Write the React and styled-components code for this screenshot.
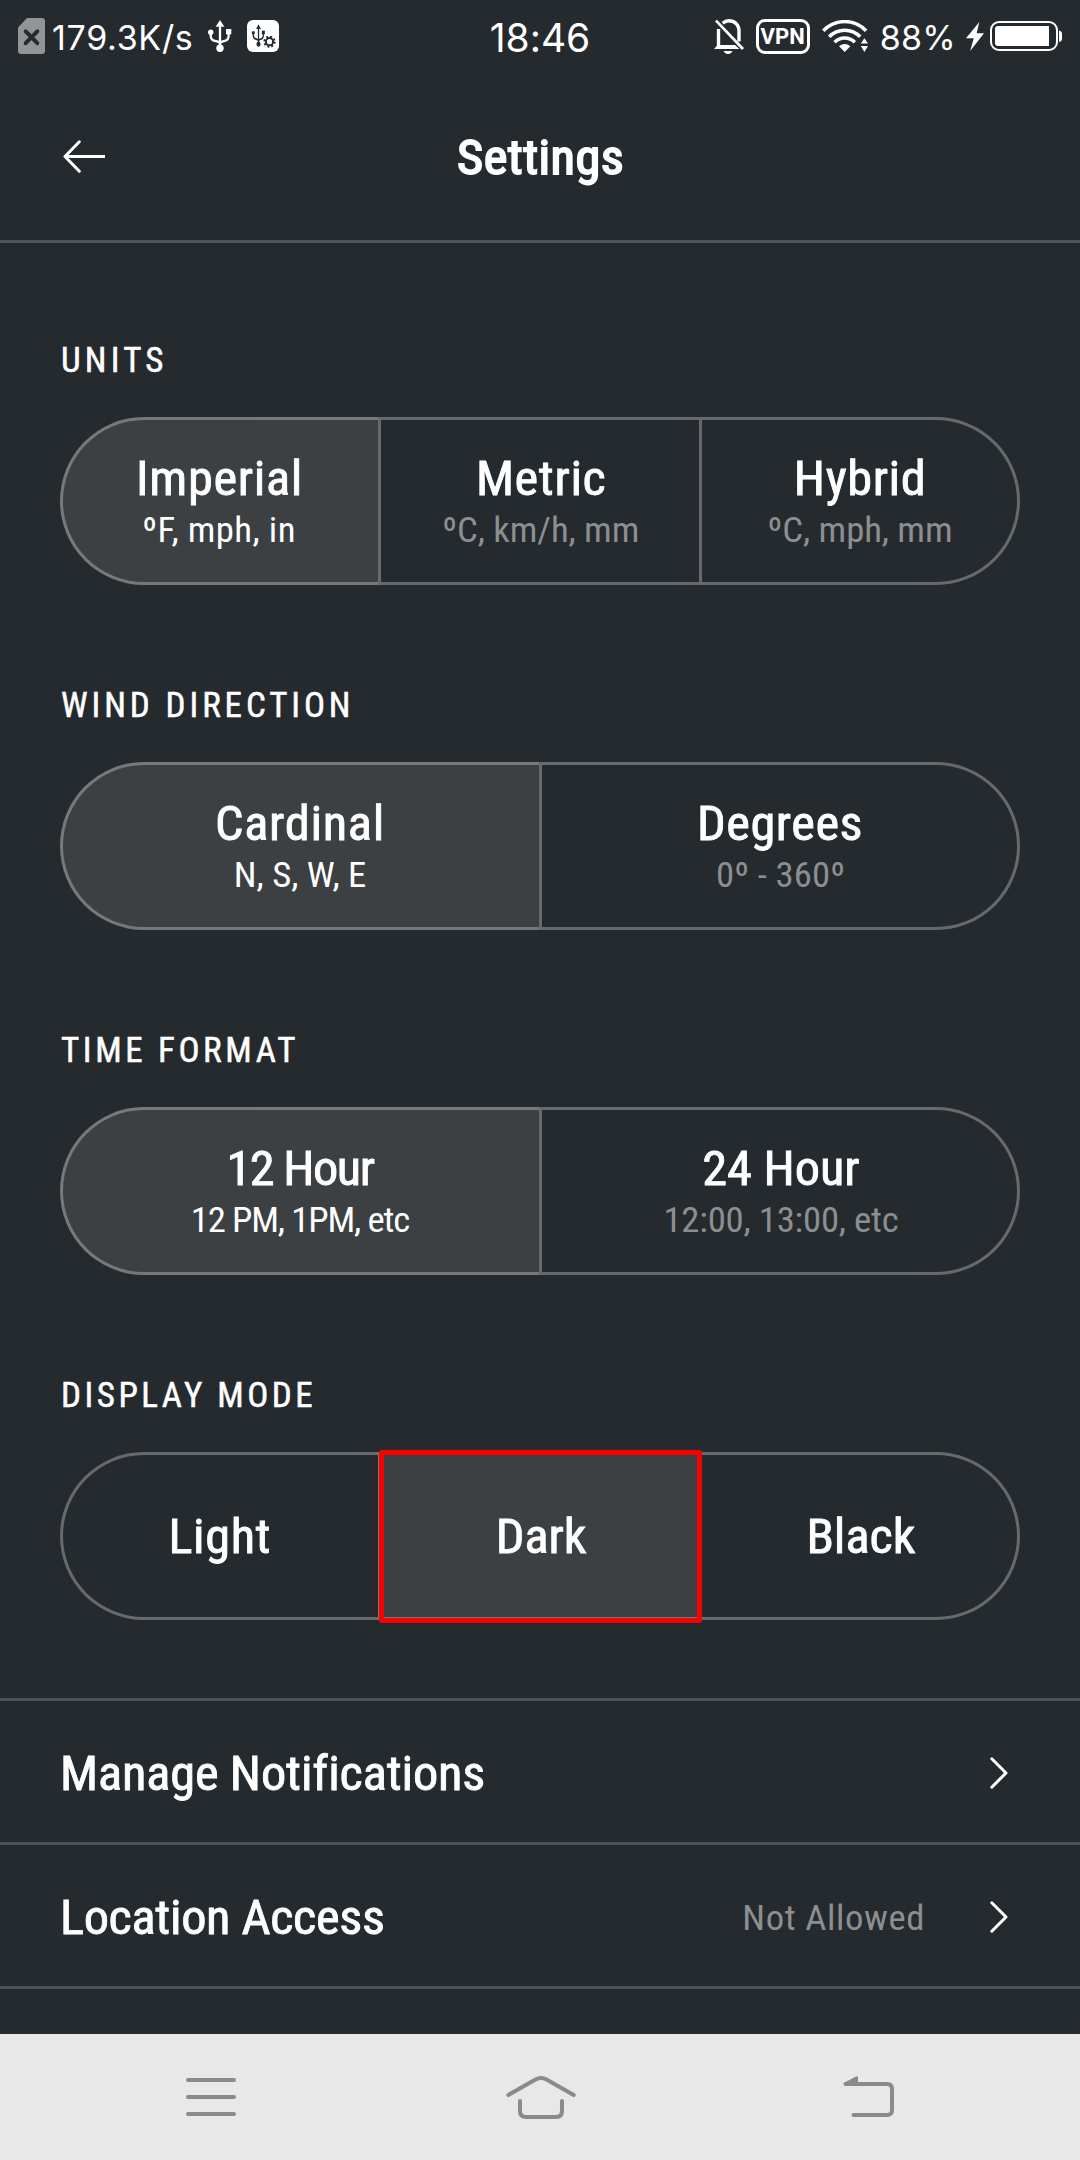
import React from "react";
import styled, { createGlobalStyle, css } from "styled-components";

const BG = "#252a2e";
const MUTED = "#8c8f91";
const HAIRLINE = "#4f5457";

const GlobalStyle = createGlobalStyle`
  * { box-sizing: border-box; }
  body { margin: 0; background: ${BG}; }
`;

const Screen = styled.div`
  width: 1080px;
  height: 2160px;
  display: flex;
  flex-direction: column;
  overflow: hidden;
  background: ${BG};
  color: #fff;
  font-family: Roboto, "Liberation Sans", sans-serif;
  font-stretch: 75%;
  font-variant-ligatures: none;
  white-space: nowrap;
`;

/* Condensed letters opened up slightly, between the condensed and normal cuts. */
const widened = css`
  transform: scaleX(1.05);
`;

/* ---------- status bar ---------- */

const StatusBar = styled.div`
  flex: none;
  height: 72px;
  padding: 0 18px;
  display: grid;
  grid-template-columns: 1fr auto 1fr;
  align-items: center;
  font-family: Inter, "Liberation Sans", sans-serif;
  font-stretch: 100%;
`;

const StatusGroup = styled.div`
  display: flex;
  align-items: center;
  justify-content: ${(p) => (p.$end ? "flex-end" : "flex-start")};
  gap: ${(p) => p.$gap}px;

  svg { display: block; flex: none; }
`;

const StatusText = styled.span`
  padding-top: 3px;
  font-size: ${(p) => p.$size}px;
  line-height: 48px;
  letter-spacing: ${(p) => p.$tracking || 0}px;
`;

const VpnBadge = styled.span`
  flex: none;
  width: 54px;
  height: 35px;
  padding-top: 1px;
  display: flex;
  align-items: center;
  justify-content: center;
  border: 3px solid #fff;
  border-radius: 9px;
  font: 700 22px/28px Roboto, "Liberation Sans", sans-serif;
`;

/* ---------- header ---------- */

const Header = styled.header`
  flex: none;
  height: 171px;
  padding: 0 63px;
  display: grid;
  grid-template-columns: 1fr auto 1fr;
  align-items: center;
  border-bottom: 3px solid ${HAIRLINE};

  svg { display: block; }
`;

const Title = styled.h1`
  margin: 0;
  padding: 3px 0 0 2px;
  font-size: 48px;
  font-weight: 400;
  line-height: 57px;
  letter-spacing: 0.45px;
  -webkit-text-stroke: 1.8px #fff;
  ${widened}
`;

/* ---------- segmented settings ---------- */

const Sections = styled.main`
  flex: none;
  padding: 98px 60px 78px;
  display: flex;
  flex-direction: column;
  gap: 101px;
`;

const Section = styled.section`
  display: flex;
  flex-direction: column;
  gap: 36px;
`;

const Label = styled.h2`
  margin: 0;
  padding-left: 1px;
  font-size: 35px;
  font-weight: 400;
  line-height: 40px;
  letter-spacing: ${(p) => p.$tracking}px;
  -webkit-text-stroke: 0.5px #fff;
`;

const Segments = styled.div`
  height: 168px;
  display: grid;
  grid-template-columns: ${(p) => (p.$count === 3 ? "318px 321px 321px" : "479px 481px")};
`;

const Segment = styled.button`
  position: relative;
  margin: 0;
  padding: 2px 0 0 2px;
  display: flex;
  flex-direction: column;
  align-items: center;
  justify-content: center;
  border: 3px solid rgba(255, 255, 255, 0.3);
  border-right-width: 0;
  background: ${(p) => (p.$active ? "#3c4043" : "transparent")};
  color: #fff;
  font: inherit;

  &:first-child { padding: 2px 2px 0 0; border-radius: 84px 0 0 84px; }
  &:last-child { border-right-width: 3px; border-radius: 0 84px 84px 0; }
`;

const SegmentTitle = styled.span`
  font-size: 48px;
  line-height: 56px;
  letter-spacing: ${(p) => p.$tracking}px;
  -webkit-text-stroke: 0.8px #fff;
  ${widened}
`;

const SegmentHint = styled.span`
  font-size: 35px;
  line-height: 47px;
  letter-spacing: ${(p) => p.$tracking}px;
  color: ${(p) => (p.$active ? "#fff" : MUTED)};
  ${widened}
`;

const Highlight = styled.span`
  position: absolute;
  z-index: 1;
  left: -2px;
  top: -5px;
  width: 323px;
  height: 173px;
  border: 5px solid #f80000;
  border-radius: 3px;
`;

/* ---------- link rows ---------- */

const Links = styled.nav`
  flex: 1;
  border-top: 3px solid ${HAIRLINE};
`;

const LinkRow = styled.div`
  height: 144px;
  padding: 3px 72px 0 60px;
  display: flex;
  align-items: center;
  border-bottom: 3px solid ${HAIRLINE};

  svg { display: block; flex: none; }
`;

const LinkTitle = styled.span`
  margin-right: auto;
  padding-top: 1px;
  font-size: 48px;
  line-height: 57px;
  letter-spacing: ${(p) => p.$tracking}px;
  -webkit-text-stroke: 0.8px #fff;
  ${widened}
  transform-origin: left;
`;

const LinkValue = styled.span`
  margin-right: 65px;
  padding-top: 2px;
  font-size: 35px;
  line-height: 45px;
  letter-spacing: 0.55px;
  color: ${MUTED};
  ${widened}
  transform-origin: right;
`;

/* ---------- system navigation ---------- */

const NavBar = styled.div`
  flex: none;
  height: 126px;
  padding: 0 186px;
  display: flex;
  align-items: center;
  justify-content: space-between;
  background: #e8e8e8;
  color: #8a8a8a;

  svg { display: block; }
`;

/* ---------- icons ---------- */

const SimIcon = () => (
  <svg width="27" height="36" viewBox="0 0 27 36">
    <path d="M9 0H24a3 3 0 0 1 3 3V33a3 3 0 0 1-3 3H3a3 3 0 0 1-3-3V9.5Z" fill="#929597" />
    <path d="M7.7 13.3 19.3 25.2M19.3 13.3 7.7 25.2" stroke={BG} strokeWidth="4" strokeLinecap="round" />
  </svg>
);

const UsbShape = ({ color }) => (
  <g stroke={color} fill="none">
    <path d="M12 4V28M2.7 12V16Q2.7 20.500 8 21.200Q12 22 12 24M20.600 12V16Q20.600 20.500 16 21.200Q12 22 12 24" strokeWidth="2.300" />
    <path d="M12 0 16.300 6.800H7.700Z" fill={color} stroke="none" />
    <circle cx="12" cy="28.300" r="3.700" fill={color} stroke="none" />
    <circle cx="2.700" cy="12.200" r="2.700" fill={color} stroke="none" />
    <rect x="18" y="9" width="5.300" height="5.300" fill={color} stroke="none" />
  </g>
);

const UsbIcon = () => (
  <svg width="24" height="32" viewBox="0 0 24 32"><UsbShape color="#fff" /></svg>
);

const UsbGearIcon = () => (
  <svg width="32" height="32" viewBox="0 0 32 32">
    <rect width="32" height="32" rx="6" fill="#fff" />
    <g transform="translate(4.800 4.300) scale(.56 .7)"><UsbShape color={BG} /></g>
    <circle cx="22.500" cy="21.700" r="7" fill="#fff" />
    <circle cx="22.500" cy="21.700" r="3.600" fill="none" stroke={BG} strokeWidth="2" />
    <circle cx="22.500" cy="21.700" r="5.200" fill="none" stroke={BG} strokeWidth="1.800" strokeDasharray="2 2.084" />
  </svg>
);

const BellOffIcon = () => (
  <svg width="30" height="35" viewBox="0 0 30 35" fill="none" stroke="#fff">
    <path d="M4.500 10V28" strokeWidth="3.400" />
    <path d="M8.700 4.200Q11.500 1.700 15 1.700C21.500 1.700 25 6.500 25 12V22.500" strokeWidth="3.400" />
    <path d="M0 30 3.500 26H21L25.500 30Z" fill="#fff" stroke="none" />
    <path d="M2 1.600 29 30" strokeWidth="2.700" />
    <path d="M9.500 32H18.500Q17 35 14 35T9.500 32Z" fill="#fff" stroke="none" />
  </svg>
);

const WifiIcon = () => (
  <svg width="46" height="32" viewBox="0 0 46 32" fill="none" stroke="#fff" strokeWidth="3.500">
    <path d="M1.300 10.800A29.500 29.500 0 0 1 44.100 10.800" />
    <path d="M7.200 16.800A21.500 21.500 0 0 1 38.200 16.800" />
    <path d="M12.600 22.300A14 14 0 0 1 32.800 22.300" />
    <path d="M17 26.300Q22.700 21.500 28.400 26.300L22.700 32Z" fill="#fff" stroke="none" />
    <path d="M42.400 18.300 46 23.600H38.800ZM42.400 32 38.800 26H46Z" fill="#fff" stroke="none" />
  </svg>
);

const BoltIcon = () => (
  <svg width="18" height="29" viewBox="0 0 18 29">
    <path d="M13.300 0 0 16.300H7.700L4.200 29 18 11.300H10.700Z" fill="#fff" />
  </svg>
);

const BatteryIcon = () => (
  <svg width="72" height="30" viewBox="0 0 72 30">
    <rect x="1" y="1" width="66" height="28" rx="8" fill="none" stroke="#fff" strokeWidth="2" />
    <path d="M8 5H59V25H8a3 3 0 0 1-3-3V8a3 3 0 0 1 3-3Z" fill="#fff" />
    <path d="M69 9.500Q72 10 72 13V17.500Q72 20.500 69 21Z" fill="#fff" />
  </svg>
);

const BackArrow = () => (
  <svg width="42" height="33" viewBox="0 0 42 33" fill="none" stroke="#fff" strokeWidth="3" strokeLinecap="round" strokeLinejoin="round">
    <path d="M16.300 1.800 2 16.500 16.300 31.200" />
    <path d="M2 16.500H42" strokeLinecap="butt" />
  </svg>
);

const Chevron = () => (
  <svg width="18" height="32" viewBox="0 0 18 32" fill="none" stroke="#fff" strokeWidth="3" strokeLinecap="round" strokeLinejoin="round">
    <path d="M1.800 1.800 16 16 1.800 30.200" />
  </svg>
);

const MenuIcon = () => (
  <svg width="50" height="38" viewBox="0 0 50 38" stroke="currentColor" strokeWidth="4" strokeLinecap="round">
    <path d="M2 2H48M2 19H48M2 36H48" />
  </svg>
);

const HomeIcon = () => (
  <svg width="73" height="43" viewBox="-3 0 73 43" fill="none" stroke="currentColor" strokeWidth="4" strokeLinecap="round">
    <path d="M2.300 19 29.500 3.500Q35 .6 40.500 3.500L67.700 19" />
    <path d="M14 25V35Q14 41 20 41H50Q56 41 56 35V25" />
  </svg>
);

const ReturnIcon = () => (
  <svg width="51" height="43" viewBox="0 0 51 43" fill="none" stroke="currentColor" strokeWidth="4" strokeLinecap="round">
    <path d="M2.500 8H44Q49 8 49 13V34Q49 39 44 39H10.500" />
    <path d="M.6 7 12.500.8Q15 -.4 15 1.500V8H2Z" fill="currentColor" stroke="none" />
  </svg>
);

/* ---------- content ---------- */

const sections = [
  {
    label: "UNITS", tracking: 4.2,
    options: [
      { title: "Imperial", tracking: 0.64, hint: "ºF, mph, in", hintTracking: 0.35, active: true },
      { title: "Metric", tracking: 0.6, hint: "ºC, km/h, mm", hintTracking: -0.08 },
      { title: "Hybrid", tracking: 0.54, hint: "ºC, mph, mm", hintTracking: -0.08 },
    ],
  },
  {
    label: "WIND DIRECTION", tracking: 3.9,
    options: [
      { title: "Cardinal", tracking: 0.68, hint: "N, S, W, E", hintTracking: -0.04, active: true },
      { title: "Degrees", tracking: 0.5, hint: "0º - 360º", hintTracking: 0.12 },
    ],
  },
  {
    label: "TIME FORMAT", tracking: 3.63,
    options: [
      { title: "12 Hour", tracking: -1.44, hint: "12 PM, 1PM, etc", hintTracking: -1.1, active: true },
      { title: "24 Hour", tracking: -0.02, hint: "12:00, 13:00, etc", hintTracking: -0.2 },
    ],
  },
  {
    label: "DISPLAY MODE", tracking: 3.51,
    options: [
      { title: "Light", tracking: 0.55 },
      { title: "Dark", tracking: -0.15, active: true, highlighted: true },
      { title: "Black", tracking: -0.05 },
    ],
  },
];

const links = [
  { title: "Manage Notifications", tracking: -0.13 },
  { title: "Location Access", tracking: -0.32, value: "Not Allowed" },
];

export default function App() {
  return (
    <>
      <GlobalStyle />
      <Screen>
        <StatusBar>
          <StatusGroup $gap={15}>
            <StatusGroup $gap={7}>
              <SimIcon />
              <StatusText $size={34} $tracking={0.7}>179.3K/s</StatusText>
            </StatusGroup>
            <UsbIcon />
            <UsbGearIcon />
          </StatusGroup>
          <StatusText $size={39}>18:46</StatusText>
          <StatusGroup $end $gap={12}>
            <BellOffIcon />
            <VpnBadge>VPN</VpnBadge>
            <WifiIcon />
            <StatusGroup $gap={10}>
              <StatusText $size={34} $tracking={0.3}>88%</StatusText>
              <StatusGroup $gap={6}>
                <BoltIcon />
                <BatteryIcon />
              </StatusGroup>
            </StatusGroup>
          </StatusGroup>
        </StatusBar>

        <Header>
          <BackArrow />
          <Title>Settings</Title>
        </Header>

        <Sections>
          {sections.map((section) => (
            <Section key={section.label}>
              <Label $tracking={section.tracking}>{section.label}</Label>
              <Segments $count={section.options.length}>
                {section.options.map((option) => (
                  <Segment key={option.title} $active={option.active}>
                    <SegmentTitle $tracking={option.tracking}>{option.title}</SegmentTitle>
                    {option.hint && (
                      <SegmentHint $active={option.active} $tracking={option.hintTracking}>
                        {option.hint}
                      </SegmentHint>
                    )}
                    {option.highlighted && <Highlight />}
                  </Segment>
                ))}
              </Segments>
            </Section>
          ))}
        </Sections>

        <Links>
          {links.map((link) => (
            <LinkRow key={link.title}>
              <LinkTitle $tracking={link.tracking}>{link.title}</LinkTitle>
              {link.value && <LinkValue>{link.value}</LinkValue>}
              <Chevron />
            </LinkRow>
          ))}
        </Links>

        <NavBar>
          <MenuIcon />
          <HomeIcon />
          <ReturnIcon />
        </NavBar>
      </Screen>
    </>
  );
}
